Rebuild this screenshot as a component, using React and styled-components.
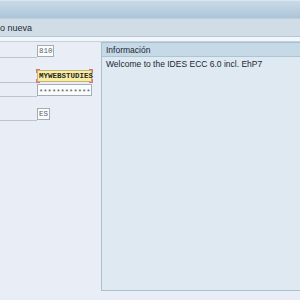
import React from "react";
import styled, { createGlobalStyle } from "styled-components";

const Global = createGlobalStyle`
  html, body { margin: 0; padding: 0; }
  body { font-family: "Liberation Sans", Arial, sans-serif; }
`;

const Screen = styled.div`
  width: 300px;
  height: 300px;
  overflow: hidden;
  background: #e9eef6;
  display: flex;
  flex-direction: column;
`;

const TopBar = styled.div`
  height: 17px;
  flex: none;
  border-top: 1px solid #dbe6ee;
  background: linear-gradient(#c9dae7, #abc5d8);
`;

const TitleBar = styled.div`
  height: 19px;
  flex: none;
  background: #d0dde6;
  border-top: 1px solid #bdd0de;
  border-bottom: 1px solid #b6c6d2;
  box-sizing: border-box;
  display: flex;
  align-items: center;
  font-size: 9px;
  color: #1e2a36;
`;

const Stripe = styled.div`
  height: 4px;
  flex: none;
  background: #f2f6fa;
  border-bottom: 1px solid #c2d2de;
`;

const Content = styled.div`
  flex: 1;
  display: flex;
  align-items: flex-start;
`;

const Form = styled.div`
  width: 101px;
  flex: none;
  display: flex;
  flex-direction: column;
`;

const Row = styled.div`
  display: flex;
  align-items: flex-start;
  margin-top: ${(p) => p.$gap}px;
`;

const Label = styled.div`
  width: 37px;
  height: ${(p) => p.$h}px;
  flex: none;
  border-bottom: 1px solid #b9c6d1;
`;

const Field = styled.div`
  position: relative;
  box-sizing: border-box;
  width: ${(p) => p.$w}px;
  height: ${(p) => p.$h || 12}px;
  border: 1px solid ${(p) => (p.$focus ? "#c9b36a" : "#a3adb8")};
  background: ${(p) => (p.$focus ? "#f7eda6" : "#fbfcfd")};
  font-family: "Liberation Mono", "DejaVu Sans Mono", monospace;
  font-size: 7.5px;
  font-weight: ${(p) => (p.$bold ? 700 : 400)};
  color: ${(p) => (p.$focus ? "#2a2a20" : "#5a6068")};
  display: flex;
  align-items: center;
  padding-left: 1px;
  white-space: nowrap;
  overflow: visible;
`;

const Corner = styled.span`
  position: absolute;
  width: 3px;
  height: 3px;
  border-color: #d2708e;
  border-style: solid;
  border-width: 0;
  ${(p) => (p.$top ? "top: -2px; border-top-width: 1px;" : "bottom: -2px; border-bottom-width: 1px;")}
  ${(p) => (p.$left ? "left: -2px; border-left-width: 1px;" : "right: -2px; border-right-width: 1px;")}
`;

const Caret = styled.span`
  display: inline-block;
  width: 1px;
  height: 8px;
  background: #333;
`;

const Stars = styled.span`
  font-size: 7px;
  color: #4a4f55;
  letter-spacing: 0.1px;
  padding-top: 3px;
`;

const Panel = styled.div`
  flex: none;
  width: 220px;
  height: 249px;
  box-sizing: border-box;
  border: 1px solid #a9c0d0;
  border-right: none;
  background: #dee9f2;
  display: flex;
  flex-direction: column;
`;

const PanelHeader = styled.div`
  height: 13px;
  flex: none;
  background: #c5d9e7;
  border-bottom: 1px solid #aec4d3;
  display: flex;
  align-items: center;
  padding-left: 4px;
  font-size: 8.5px;
  color: #1c2733;
`;

const PanelBody = styled.div`
  padding: 2px 0 0 4px;
  font-size: 8.5px;
  color: #1c2733;
`;

function FocusField({ children }) {
  return (
    <Field $w={55} $h={12} $focus $bold>
      {children}
      <Caret />
      <Corner $top $left />
      <Corner $top />
      <Corner $left />
      <Corner />
    </Field>
  );
}

export default function App() {
  return (
    <>
      <Global />
      <Screen>
        <TopBar />
        <TitleBar>o nueva</TitleBar>
        <Stripe />
        <Content>
          <Form>
            <Row $gap={3}>
              <Label $h={12} />
              <Field $w={17}>810</Field>
            </Row>
            <Row $gap={12}>
              <Label $h={12} />
              <FocusField>MYWEBSTUDIES</FocusField>
            </Row>
            <Row $gap={1}>
              <Label $h={12} />
              <Field $w={55}>
                <Stars>************</Stars>
              </Field>
            </Row>
            <Row $gap={11}>
              <Label $h={12} />
              <Field $w={13}>ES</Field>
            </Row>
          </Form>
          <Panel>
            <PanelHeader>Información</PanelHeader>
            <PanelBody>Welcome to the IDES ECC 6.0 incl. EhP7</PanelBody>
          </Panel>
        </Content>
      </Screen>
    </>
  );
}
